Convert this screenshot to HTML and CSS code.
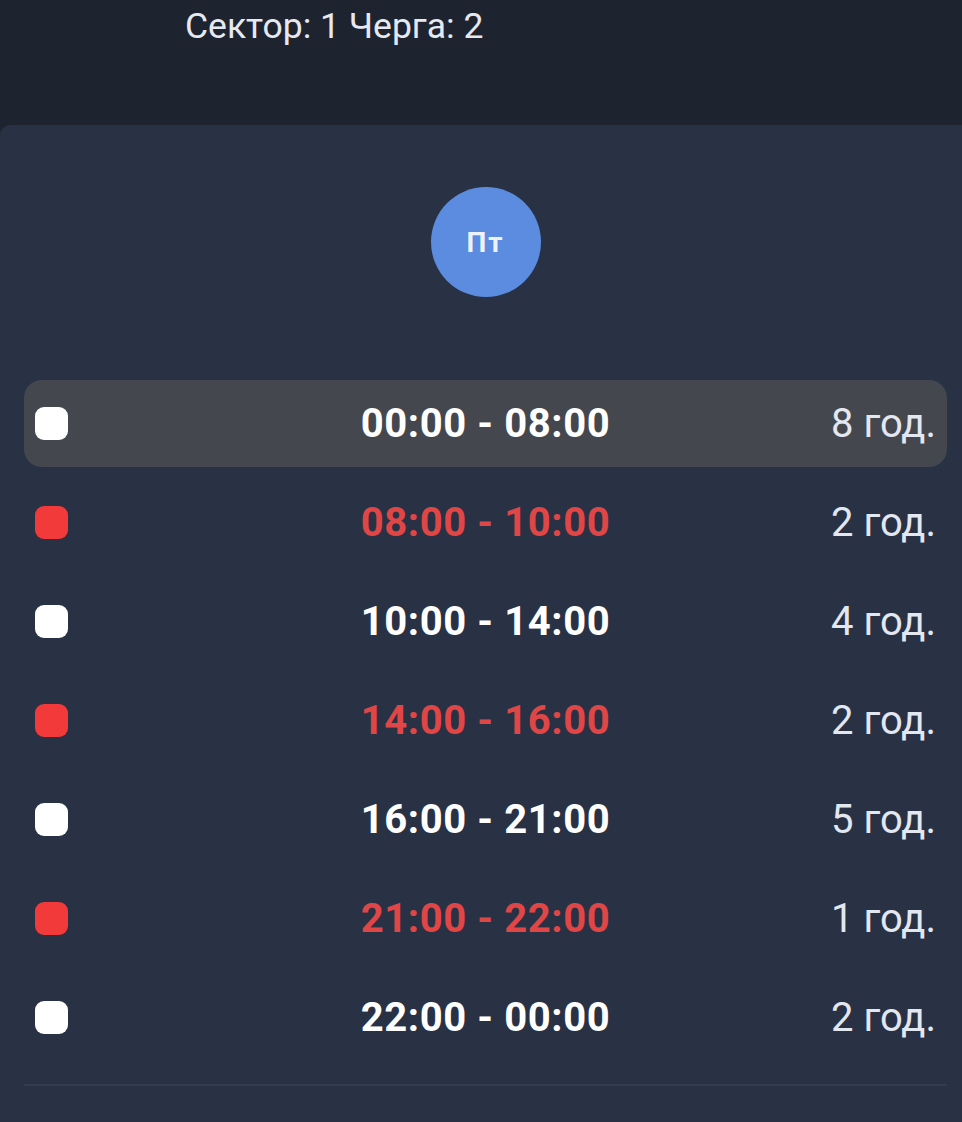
FILE: index.html
```html
<!DOCTYPE html>
<html lang="uk">
<head>
<meta charset="utf-8">
<link rel="stylesheet" href="styles.css">
</head>
<body>
<header class="top">
  <div class="sector">Сектор: 1 Черга: 2</div>
</header>
<main class="panel">
  <div class="day-wrap"><div class="day">Пт</div></div>
  <ul class="rows">
    <li class="row active"><span class="dot"></span><span class="time">00:00 - 08:00</span><span class="dur">8 год.</span></li>
    <li class="row off"><span class="dot"></span><span class="time">08:00 - 10:00</span><span class="dur">2 год.</span></li>
    <li class="row"><span class="dot"></span><span class="time">10:00 - 14:00</span><span class="dur">4 год.</span></li>
    <li class="row off"><span class="dot"></span><span class="time">14:00 - 16:00</span><span class="dur">2 год.</span></li>
    <li class="row"><span class="dot"></span><span class="time">16:00 - 21:00</span><span class="dur">5 год.</span></li>
    <li class="row off"><span class="dot"></span><span class="time">21:00 - 22:00</span><span class="dur">1 год.</span></li>
    <li class="row"><span class="dot"></span><span class="time">22:00 - 00:00</span><span class="dur">2 год.</span></li>
  </ul>
  <div class="divider"></div>
</main>
</body>
</html>
```
FILE: styles.css
```css
* { box-sizing: border-box; }
html, body { margin: 0; padding: 0; }
body {
  width: 962px;
  height: 1122px;
  overflow: hidden;
  background: #1e2330;
  font-family: Roboto, "Noto Sans", sans-serif;
}
.top {
  height: 125px;
  padding: 7px 0 0 185px;
}
.sector {
  color: #e6e9f0;
  font-size: 35.5px;
  line-height: 38px;
}
.panel {
  background: #293245;
  border-radius: 10px 0 0 0;
  height: 997px;
  padding: 62px 15px 0 24px;
}
.day-wrap {
  display: flex;
  justify-content: center;
}
.day {
  width: 110px;
  height: 110px;
  border-radius: 50%;
  background: #5b8ce0;
  color: #eef2fb;
  font-weight: 700;
  font-size: 28px;
  letter-spacing: 2px;
  display: flex;
  align-items: center;
  justify-content: center;
}
.rows {
  list-style: none;
  margin: 83px 0 0 0;
  padding: 0;
  display: flex;
  flex-direction: column;
  gap: 12px;
}
.row {
  height: 87px;
  border-radius: 18px;
  padding: 0 11px;
  display: grid;
  grid-template-columns: 1fr auto 1fr;
  align-items: center;
}
.row.active { background: #45474f; }
.dot {
  width: 33px;
  height: 33px;
  border-radius: 9px;
  background: #ffffff;
}
.off .dot { background: #f23a3a; }
.time {
  color: #ffffff;
  font-weight: 700;
  font-size: 40px;
  letter-spacing: 0.6px;
}
.off .time { color: #e04646; }
.dur {
  justify-self: end;
  color: #e3e7f0;
  font-size: 40px;
}
.divider {
  margin-top: 23px;
  height: 2px;
  background: #333c51;
}
```
